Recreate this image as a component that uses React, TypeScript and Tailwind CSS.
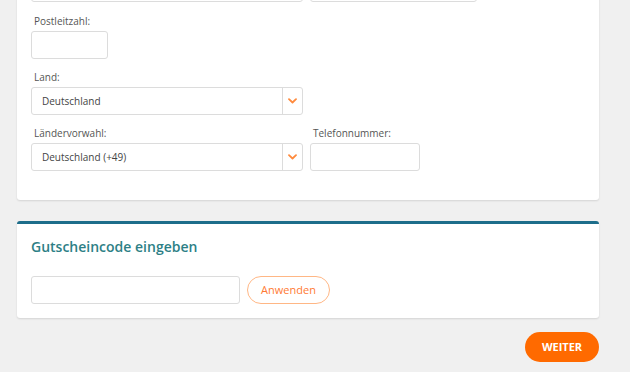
const FONT = { fontFamily: '"Open Sans", "Noto Sans", sans-serif' };

function Label({ children }: { children: React.ReactNode }) {
  return (
    <div className="h-[16px] leading-[16px] mb-[2px] pl-[3px] text-[10px] text-[#555]">
      {children}
    </div>
  );
}

function TextInput({ className = "" }: { className?: string }) {
  return (
    <div
      className={`h-[28px] rounded-[3px] border border-[#dcdcdc] bg-white ${className}`}
    />
  );
}

function Select({ value }: { value: string }) {
  return (
    <div className="flex h-[28px] w-[272px] items-stretch rounded-[3px] border border-[#dcdcdc] bg-white">
      <div className="flex flex-1 items-center pl-[10px] text-[10px] text-[#444]">
        {value}
      </div>
      <div className="flex w-[20px] items-center justify-center border-l border-[#dcdcdc]">
        <svg width="9" height="6" viewBox="0 0 9 6" fill="none">
          <path d="M1 1.2 4.5 4.5 8 1.2" stroke="#ff8a3d" strokeWidth="1.8" strokeLinecap="round" strokeLinejoin="round" />
        </svg>
      </div>
    </div>
  );
}

export default function App() {
  return (
    <div className="h-[372px] w-[630px] overflow-hidden bg-[#f0f0f0]" style={FONT}>
      <div className="ml-[17px] w-[582px]">
        {/* Adresse */}
        <div className="-mt-[40px] rounded-b-[3px] bg-white px-[14px] pt-[14px] pb-[29px] shadow-[0_1px_2px_rgba(0,0,0,0.12)]">
          <div className="flex gap-[7px]">
            <TextInput className="w-[272px]" />
            <TextInput className="w-[167px]" />
          </div>

          <div className="mt-[11px]">
            <Label>Postleitzahl:</Label>
            <TextInput className="w-[77px]" />
          </div>

          <div className="mt-[10px]">
            <Label>Land:</Label>
            <Select value="Deutschland" />
          </div>

          <div className="mt-[10px] flex gap-[7px]">
            <div>
              <Label>Ländervorwahl:</Label>
              <Select value="Deutschland (+49)" />
            </div>
            <div>
              <Label>Telefonnummer:</Label>
              <TextInput className="w-[110px]" />
            </div>
          </div>
        </div>

        {/* Gutschein */}
        <div className="mt-[21px] rounded-[3px] border-t-[3px] border-[#1d6d8a] bg-white px-[14px] pt-[13px] pb-[14px] shadow-[0_1px_2px_rgba(0,0,0,0.12)]">
          <h2 className="h-[20px] text-[14px] leading-[20px] font-semibold text-[#2d7f86]">
            Gutscheincode eingeben
          </h2>
          <div className="mt-[19px] flex gap-[7px]">
            <TextInput className="w-[209px]" />
            <button className="h-[28px] w-[83px] rounded-full border border-[#ffb785] bg-white text-[11px] text-[#ff7a33]">
              Anwenden
            </button>
          </div>
        </div>

        <div className="mt-[14px] flex justify-end">
          <button className="h-[30px] w-[74px] rounded-full bg-[#ff6a00] text-[11px] font-bold text-white">
            WEITER
          </button>
        </div>
      </div>
    </div>
  );
}
